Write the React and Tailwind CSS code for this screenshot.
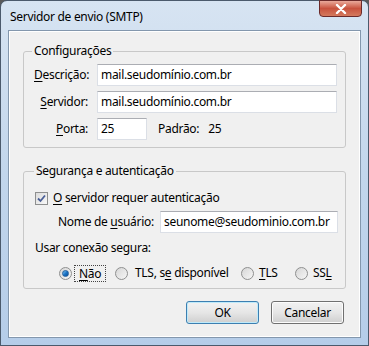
import React from 'react';

const font = { fontFamily: '"Noto Sans", "Liberation Sans", sans-serif' };

function Key({ children }) {
  return <span className="underline underline-offset-2">{children}</span>;
}

function TextBox({ value, className = '' }) {
  return (
    <div
      className={`h-[22px] min-w-0 flex items-center px-[3px] bg-white border border-[#dbdfe6] border-t-[#abadb3] text-[12px] text-black whitespace-nowrap overflow-hidden ${className}`}
    >
      {value}
    </div>
  );
}

function Radio({ checked }) {
  return (
    <span className="w-[13px] h-[13px] rounded-full border border-[#8e8f8f] bg-gradient-to-br from-[#d6d6d6] to-[#f6f6f6] flex items-center justify-center shrink-0">
      {checked && (
        <span className="w-[7px] h-[7px] rounded-full bg-gradient-to-br from-[#7dc7f2] via-[#1b75c7] to-[#0d4f99] border border-[#1f5e9e]" />
      )}
    </span>
  );
}

function Check() {
  return (
    <span className="w-[13px] h-[13px] border border-[#8e8f8f] bg-gradient-to-br from-[#dcdcdc] to-[#f8f8f8] flex items-center justify-center shrink-0">
      <svg width="9" height="9" viewBox="0 0 9 9">
        <path d="M1 4.5 L3.5 7 L8 1.5" fill="none" stroke="#4a5f97" strokeWidth="1.8" />
      </svg>
    </span>
  );
}

function Button({ children, primary }) {
  return (
    <button
      className={`w-[73px] h-[23px] rounded-[3px] border text-[12px] text-black bg-gradient-to-b from-[#f2f2f2] via-[#e6e6e6] to-[#cfcfcf] ${
        primary
          ? 'border-[#3c7fb1] shadow-[inset_0_0_0_1px_#bfeafa]'
          : 'border-[#707070] shadow-[inset_0_0_0_1px_#fcfcfc]'
      }`}
    >
      {children}
    </button>
  );
}

export default function App() {
  return (
    <div className="w-[369px] h-[346px] bg-[#5a5a5a] tracking-[-0.3px]" style={font}>
      <div className="w-full h-full rounded-t-[7px] border border-[#4b5a6c] bg-gradient-to-b from-[#d7e4f2] via-[#c2d6ec] to-[#b5cde9] flex flex-col">
        {/* Title bar */}
        <div className="h-[29px] flex justify-between pl-[9px] pr-[6px]">
          <span className="text-[12px] text-black mt-[7px]">Servidor de envio (SMTP)</span>
          <div className="w-[43px] h-[17px] -mt-px rounded-b-[4px] border border-[#6b2a2a] bg-gradient-to-b from-[#e9a99b] via-[#c8523e] to-[#d47a5e] flex items-center justify-center">
            <svg width="12" height="10" viewBox="0 0 12 10">
              <path d="M2 1 L10 9 M10 1 L2 9" stroke="#fff" strokeWidth="2.4" strokeLinecap="round" />
            </svg>
          </div>
        </div>

        {/* Client area */}
        <div className="mx-[7px] mb-[7px] flex-1 bg-[#f0f0f0] border border-[#8397ad] shadow-[inset_0_0_0_1px_#ffffff] flex flex-col px-[14px] pt-[12px] pb-[13px] text-[12px] text-black">
          <fieldset className="min-w-0 border border-[#c8c8c8] rounded-[3px] px-[10px] pt-[5px] pb-[7px]">
            <legend className="px-[2px] ml-[-2px] leading-[16px]">Configurações</legend>
            <div className="grid grid-cols-[54px_1fr] gap-x-[9px] gap-y-[5px] items-center">
              <span className="text-right whitespace-nowrap"><Key>D</Key>escrição:</span>
              <TextBox value="mail.seudomínio.com.br" className="mr-[-2px]" />
              <span className="text-right whitespace-nowrap"><Key>S</Key>ervidor:</span>
              <TextBox value="mail.seudomínio.com.br" className="mr-[-2px]" />
              <span className="text-right whitespace-nowrap"><Key>P</Key>orta:</span>
              <div className="flex items-center">
                <TextBox value="25" className="w-[50px]" />
                <span className="ml-[11px]">Padrão:</span>
                <span className="ml-[9px]">25</span>
              </div>
            </div>
          </fieldset>

          <fieldset className="min-w-0 mt-[15px] border border-[#c8c8c8] rounded-[3px] pl-[11px] pr-[7px] pt-[10px] pb-[6px]">
            <legend className="px-[2px] ml-[-1px] leading-[16px]">Segurança e autenticação</legend>
            <div className="flex items-center gap-[5px]">
              <Check />
              <span className="whitespace-nowrap"><Key>O</Key> servidor requer autenticação</span>
            </div>
            <div className="flex items-center mt-[4px] pl-[23px]">
              <span className="w-[102px] shrink-0 whitespace-nowrap">Nome de <Key>u</Key>suário:</span>
              <TextBox value="seunome@seudominio.com.br" className="flex-1" />
            </div>
            <div className="mt-[6px]">Usar conexão segura:</div>
            <div className="flex items-center mt-[7px] pl-[24px] whitespace-nowrap">
              <div className="w-[56px] flex items-center shrink-0">
                <Radio checked />
                <span className="ml-[2px] px-[4px] border border-dotted border-[#444] leading-[15px]"><Key>N</Key>ão</span>
              </div>
              <div className="w-[126px] flex items-center shrink-0">
                <Radio />
                <span className="ml-[7px]">TLS, s<Key>e</Key> disponível</span>
              </div>
              <div className="w-[54px] flex items-center shrink-0">
                <Radio />
                <span className="ml-[5px]"><Key>T</Key>LS</span>
              </div>
              <div className="flex items-center shrink-0">
                <Radio />
                <span className="ml-[5px]">SS<Key>L</Key></span>
              </div>
            </div>
          </fieldset>

          <div className="mt-auto flex justify-end gap-[12px] pr-[2px]">
            <Button primary>OK</Button>
            <Button>Cancelar</Button>
          </div>
        </div>
      </div>
    </div>
  );
}
